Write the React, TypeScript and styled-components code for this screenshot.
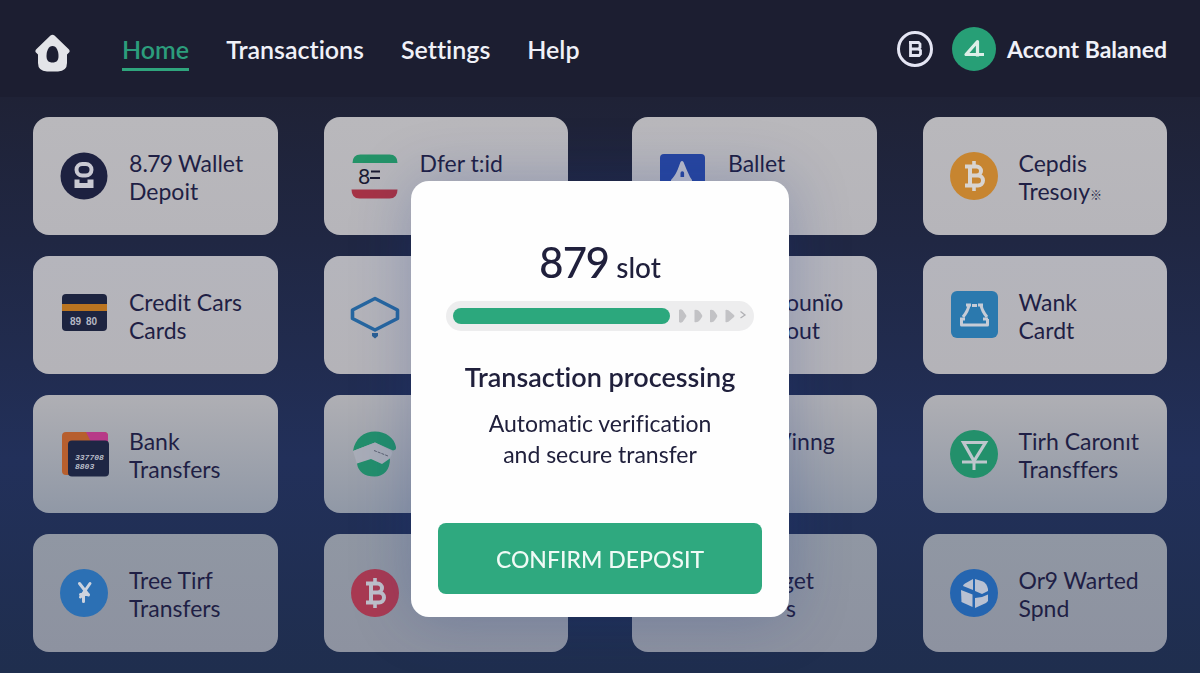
import React from "react";
import styled, { createGlobalStyle } from "styled-components";

const GlobalStyle = createGlobalStyle`
  *, *::before, *::after { box-sizing: border-box; }
  html, body, #root { min-height: 100vh; }
  body {
    margin: 0;
    font-family: Lato, "Open Sans", "Noto Sans CJK JP", sans-serif;
    font-variant-ligatures: none;
    font-variant-numeric: proportional-nums;
    color: #1f1f45;
    background: #1f2a48;
  }
  button { font: inherit; font-variant-ligatures: none; font-variant-numeric: proportional-nums; color: inherit; }
`;

const Page = styled.div`
  min-height: 100vh;
  background: linear-gradient(180deg, #1f2236 97px, #202743 240px, #22305a 460px, #1f2e4e 100%);
`;

const Header = styled.header`
  display: flex;
  align-items: center;
  height: 97px;
  padding: 0 33px;
  background: #1c1e31;
`;

const HomeLink = styled.a`
  display: flex;
  width: 38px;
  margin-right: 51px;
  padding-top: 8px;
`;

const Nav = styled.nav`
  display: flex;
  gap: 37px;
`;

const NavLink = styled.a<{ $active?: boolean }>`
  padding: 8px 0 4px;
  font-size: 25px;
  font-weight: 600;
  line-height: 30px;
  text-decoration: none;
  color: ${(p) => (p.$active ? "#2c9d7c" : "#f0f1f8")};
  border-bottom: 3px solid ${(p) => (p.$active ? "#2fa57d" : "transparent")};
`;

const Account = styled.div`
  display: flex;
  align-items: center;
  margin-left: auto;
  color: #f0f1f8;
  font-size: 23px;
  font-weight: 700;
`;

const RoundButton = styled.button<{ $filled?: boolean }>`
  display: grid;
  place-items: center;
  width: ${(p) => (p.$filled ? 44 : 36)}px;
  height: ${(p) => (p.$filled ? 44 : 36)}px;
  margin-right: ${(p) => (p.$filled ? 11 : 19)}px;
  padding: 0;
  border: ${(p) => (p.$filled ? "0" : "3px solid #e4e5f3")};
  border-radius: 50%;
  background: ${(p) => (p.$filled ? "#279f76" : "transparent")};
`;

const Methods = styled.main`
  display: grid;
  grid-template-columns: 1fr 1fr;
  gap: 64px;
  padding: 20px 33px;
`;

const MethodGroup = styled.div`
  display: grid;
  grid-template-columns: 1fr 1fr;
  gap: 21px 46px;
`;

const tones = [
  "linear-gradient(180deg, #b9b8bc, #b6b5ba)",
  "linear-gradient(180deg, #b5b5bc, #b4b3b8)",
  "linear-gradient(180deg, #afafb4, #9098a6)",
  "linear-gradient(180deg, #9097a3, #8d92a0)",
];

const Card = styled.button<{ $row: number }>`
  display: flex;
  align-items: center;
  gap: 21px;
  min-height: 118px;
  padding: 0 10px 0 27px;
  border: 0;
  border-radius: 16px;
  background: ${(p) => tones[p.$row]};
  text-align: left;
`;

const CardIcon = styled.svg`
  flex: none;
  width: 48px;
  height: 48px;
  overflow: visible;
`;

const CardLabel = styled.span`
  display: grid;
  grid-auto-rows: 28px;
  height: 56px;
  margin-top: 2px;
  font-size: 23px;
  line-height: 28px;
  white-space: nowrap;
`;

const LabelLine = styled.span<{ $lead?: number }>`
  padding-left: ${(p) => p.$lead ?? 0}px;
`;

const Sparkle = styled.small`
  font-size: 12px;
`;

const Overlay = styled.div`
  position: fixed;
  inset: 0;
  display: grid;
  place-items: center;
  padding-top: 125px;
`;

const Dialog = styled.section`
  display: flex;
  flex-direction: column;
  align-items: center;
  width: 378px;
  padding: 56px 27px 23px;
  border-radius: 18px;
  background: #fefefe;
  box-shadow: 0 0 60px rgba(20, 50, 140, 0.25);
  color: #20203c;
  text-align: center;
`;

const Amount = styled.h1`
  margin: 0;
  font-size: 42px;
  font-weight: 500;
  line-height: 50px;
`;

const Unit = styled.span`
  font-size: 28px;
`;

const Progress = styled.div`
  display: flex;
  align-items: center;
  gap: 9px;
  width: 308px;
  height: 30px;
  margin-top: 9px;
  padding: 0 7px;
  border-radius: 15px;
  background: #ededee;
`;

const ProgressFill = styled.div`
  width: 217px;
  height: 16px;
  border-radius: 8px;
  background: #2ca87d;
`;

const Heading = styled.h2`
  margin: 30px 0 0;
  font-size: 27px;
  font-weight: 600;
  line-height: 32px;
`;

const Note = styled.p`
  margin: 15px 0 0;
  font-size: 23px;
  line-height: 31px;
`;

const Confirm = styled.button`
  align-self: stretch;
  height: 71px;
  margin-top: 53px;
  border: 0;
  border-radius: 8px;
  background: #2fa97f;
  color: #effaf5;
  font-size: 23px;
  font-weight: 500;
`;

const WalletIcon = () => (
  <CardIcon viewBox="0 0 48 48">
    <circle cx="24" cy="24" r="23.5" fill="#1d2140" />
    <rect x="16.5" y="12" width="15" height="11.5" rx="5.7" fill="none" stroke="#c9c9d2" strokeWidth="4" />
    <path d="M14.500 27.500h5v3.500h8v-3.500h6V36h-19z" fill="#c9c9d2" />
  </CardIcon>
);

const CreditIcon = () => (
  <CardIcon viewBox="0 0 48 48">
    <rect x="2" y="3" width="45" height="37" rx="4" fill="#1d2440" />
    <rect x="2" y="13" width="45" height="7" fill="#ba7420" />
    <text x="10" y="34" fontSize="10" fontWeight="700" fill="#b5b8c4" fontFamily="Liberation Sans, sans-serif">89</text>
    <text x="26" y="34" fontSize="10" fontWeight="700" fill="#b5b8c4" fontFamily="Liberation Sans, sans-serif">80</text>
  </CardIcon>
);

const BankIcon = () => (
  <CardIcon viewBox="0 0 48 48">
    <rect x="2" y="2" width="46" height="43" rx="4" fill="#b75f2e" />
    <path d="M26 2h18a4 4 0 0 1 4 4v8H32z" fill="#b73a88" />
    <rect x="8" y="10.500" width="41" height="36" rx="4" fill="#1e2644" />
    <g fontSize="8" fontWeight="700" fontStyle="italic" fill="#b9bdc8" fontFamily="Liberation Mono, monospace">
      <text x="15" y="30">337708</text>
      <text x="15" y="39">8803</text>
    </g>
  </CardIcon>
);

const YenIcon = () => (
  <CardIcon viewBox="0 0 48 48">
    <circle cx="24" cy="24" r="24" fill="#2c70b4" />
    <path
      d="M19.500 14.500 28.500 26M30 14.500 20.500 28M20.500 25.500h8M23.500 25v7.500"
      fill="none"
      stroke="#cdd3de"
      strokeWidth="3"
      strokeLinecap="round"
    />
  </CardIcon>
);

const FlagIcon = () => (
  <CardIcon viewBox="0 0 48 48">
    <path d="M1.500 11q0-8.500 8-8.500h29q8 0 8 8.500z" fill="#249368" />
    <path d="M.5 37.500h46q0 9-8 9h-30q-8 0-8-9z" fill="#a63346" />
    <text x="7" y="32" fontSize="21" fill="#1b1b33">8</text>
    <path d="M20 19.500h9M19 26h10" stroke="#1b1b33" strokeWidth="2" />
  </CardIcon>
);

const HexIcon = () => (
  <CardIcon viewBox="0 0 48 48">
    <path
      d="M24 7.500 46.500 19v8.500L24 39 1.500 27.500V19z"
      fill="none"
      stroke="#2767a0"
      strokeWidth="3.600"
      strokeLinejoin="round"
    />
    <path d="M21 42h6v3l-3 2.500-3-2.500z" fill="#2a5f94" />
  </CardIcon>
);

const GlobeIcon = () => (
  <CardIcon viewBox="0 0 48 48">
    <path d="M2 21C4 8.500 13 1.500 24 1.500S43.500 8 45 17q.5 3-3 3.500L24 12.500z" fill="#238f6c" />
    <path d="M2 21 24 12.500 39 20q4 2 0 8l-8 6.500-11-5-14 4.500z" fill="#a9adb8" />
    <path d="M23 20.500l14 5.500" stroke="#5c6070" strokeWidth="1" strokeDasharray="3 1" />
    <path d="M6 33.500l14-4.500 11 5 8-5.500C39 40 33 46.500 23.500 46.500 14 46.500 7 42 6 33.500z" fill="#238f6c" />
  </CardIcon>
);

const BitcoinMark = ({ color }: { color: string }) => (
  <g fill="none" stroke={color}>
    <path
      strokeWidth="4"
      strokeLinejoin="round"
      d="M15 14.500h11.500a4.300 4.300 0 0 1 0 9H20h8a5 5 0 0 1 0 10H15M20 14.500v19"
    />
    <path strokeWidth="3.600" d="M24 9v5.500M24 33.500V39" />
  </g>
);

const CoinIcon = ({ fill, mark }: { fill: string; mark: string }) => (
  <CardIcon viewBox="0 0 48 48">
    <circle cx="24" cy="24" r="24" fill={fill} />
    <BitcoinMark color={mark} />
  </CardIcon>
);

const TowerIcon = () => (
  <CardIcon viewBox="0 0 48 48">
    <rect x="1" y="2" width="45" height="44" rx="4" fill="#2746a0" />
    <path d="M21.500 10q1.500-2 3 0c2 5 4 10 6.500 15l2 3v3H12v-3c5-5 7-11 9.500-18z" fill="#bcbecb" />
    <path d="M21.500 25v-4a1.800 1.800 0 0 1 3.600 0v4z" fill="#2746a0" />
  </CardIcon>
);

const TrayIcon = () => (
  <CardIcon viewBox="0 0 48 48">
    <rect x="1" y="0" width="47" height="47" rx="6" fill="#2b79ae" />
    <g fill="none" stroke="#c6ccd6" strokeWidth="3" strokeLinejoin="round">
      <path d="M16 14h5M22 14.500h5M28 14h5" />
      <path d="M19 14q-1 6-6 12M31 14q1 6 6 12" />
      <path d="M11.500 28v6h26v-6M10 28h5M33 28h5" />
    </g>
  </CardIcon>
);

const TriangleIcon = () => (
  <CardIcon viewBox="0 0 48 48">
    <circle cx="24" cy="24" r="24" fill="#23906b" />
    <path d="M13.500 12.500h22L24 31z" fill="none" stroke="#bec6cc" strokeWidth="3.200" />
    <path d="M12 32h25M24 28v12" stroke="#bec6cc" strokeWidth="3" />
  </CardIcon>
);

const BoxIcon = () => (
  <CardIcon viewBox="0 0 48 48">
    <circle cx="24" cy="24" r="24" fill="#2565b0" />
    <g fill="#b9c1d2">
      <path d="M13 17q0-1.500 2-2.500l8-4.500v11z" />
      <path d="M25 10l8 2.500q4 2 5 7.500v2l-6 3-7-3z" />
      <path d="M11 21l11.500 4.500V38L11.500 33z" />
      <path d="M25 29l7-1 6-2.500V32l-2 2-11 5z" />
    </g>
  </CardIcon>
);

type Line = { text: string; lead?: number; sparkle?: boolean };
type Method = { icon: React.ReactNode; name?: string; lines: Line[] };

/* Leads place the end of a label whose start lies under the dialog. */
const groups: Method[][] = [
  [
    { icon: <WalletIcon />, lines: [{ text: "8.79 Wallet" }, { text: "Depoit" }] },
    { icon: <FlagIcon />, lines: [{ text: "Dfer t:id" }] },
    { icon: <CreditIcon />, lines: [{ text: "Credit Cars" }, { text: "Cards" }] },
    { icon: <HexIcon />, name: "Network", lines: [] },
    { icon: <BankIcon />, lines: [{ text: "Bank" }, { text: "Transfers" }] },
    { icon: <GlobeIcon />, name: "Globe", lines: [] },
    { icon: <YenIcon />, lines: [{ text: "Tree Tirf" }, { text: "Transfers" }] },
    { icon: <CoinIcon fill="#a93a52" mark="#bfc0ca" />, name: "Coin", lines: [] },
  ],
  [
    { icon: <TowerIcon />, lines: [{ text: "Ballet" }] },
    { icon: <CoinIcon fill="#c78530" mark="#d8d4d0" />, lines: [{ text: "Cepdis" }, { text: "Tresoıy", sparkle: true }] },
    { icon: <CardIcon />, lines: [{ text: "ounïo", lead: 58 }, { text: "out", lead: 58 }] },
    { icon: <TrayIcon />, lines: [{ text: "Wank" }, { text: "Cardt" }] },
    { icon: <CardIcon />, lines: [{ text: "Vinng", lead: 48 }] },
    { icon: <TriangleIcon />, lines: [{ text: "Tirh Caronıt" }, { text: "Transffers" }] },
    { icon: <CardIcon />, lines: [{ text: "get", lead: 54 }, { text: "s", lead: 58 }] },
    { icon: <BoxIcon />, lines: [{ text: "Or9 Warted" }, { text: "Spnd" }] },
  ],
];

export default function App() {
  return (
    <Page>
      <GlobalStyle />
      <Header>
        <HomeLink href="#home" aria-label="Home">
          <svg width="38" height="38" viewBox="0 0 38 38">
            <path
              d="M17.500 1.500q2-1.500 4 0L36 15.500q1.500 2-.5 3.500l-1.500 1.500V29q0 8-9 8.500H14Q5 37 5 29v-8.500L3.500 19q-2-1.500-.5-3.500z"
              fill="#e3e4e8"
            />
            <path d="M19.500 12c4 0 6 5 6 10 0 4.500-2 6.500-6 6.500s-6-2-6-6.500c0-5 2-10 6-10z" fill="#1c1e31" />
          </svg>
        </HomeLink>
        <Nav>
          <NavLink href="#home" $active aria-current="page">Home</NavLink>
          <NavLink href="#transactions">Transactions</NavLink>
          <NavLink href="#settings">Settings</NavLink>
          <NavLink href="#help">Help</NavLink>
        </Nav>
        <Account>
          <RoundButton aria-label="Currency">
            <svg width="14" height="16" viewBox="0 0 14 16">
              <path
                d="M1 1.500h9.500l1.500 1.500v3.500L10.500 8l2 1.500V13L11 14.500H2.500V1.500M2.500 8h8"
                fill="none"
                stroke="#e4e5f3"
                strokeWidth="2.800"
              />
            </svg>
          </RoundButton>
          <RoundButton $filled aria-label="Account">
            <svg width="22" height="22" viewBox="0 0 22 22">
              <path d="M14.500 18.500V3.500L3 16.500h18" fill="none" stroke="#dcefe8" strokeWidth="3.200" strokeLinejoin="round" />
            </svg>
          </RoundButton>
          <span>Accont Balaned</span>
        </Account>
      </Header>

      <Methods>
        {groups.map((group, g) => (
          <MethodGroup key={g}>
            {group.map((method, i) => (
              <Card key={i} $row={Math.floor(i / 2)} aria-label={method.name}>
                {method.icon}
                <CardLabel>
                  {method.lines.map((line) => (
                    <LabelLine key={line.text} $lead={line.lead}>
                      {line.text}
                      {line.sparkle && <Sparkle>※</Sparkle>}
                    </LabelLine>
                  ))}
                </CardLabel>
              </Card>
            ))}
          </MethodGroup>
        ))}
      </Methods>

      <Overlay>
        <Dialog role="dialog" aria-labelledby="amount">
          <Amount id="amount">
            879<Unit> slot</Unit>
          </Amount>
          <Progress role="progressbar" aria-valuenow={74} aria-label="Transaction processing">
            <ProgressFill />
            <svg width="68" height="16" viewBox="0 0 68 16">
              <g fill="#c2c2c5">
                <path d="M0 2q3-2 5 2l2 3q1 1 0 2l-2 3q-2 4-5 2z" />
                <path d="M15.500 2q3-1 5.500 2l2 3q.7 1 0 2l-2 3q-2.500 3-5.500 2z" />
                <path d="M31 2q3-1 5 2l2 3q.7 1 0 2l-2 3q-2 3-5 2z" />
                <path d="M46.500 2q2-1 5 2l3.500 3q1 1 0 2l-3.500 3q-3 3-5 2z" />
              </g>
              <path d="M61.500 3.500 66 7l-4.500 3" fill="none" stroke="#b0b0b4" strokeWidth="1.300" />
            </svg>
          </Progress>
          <Heading>Transaction processing</Heading>
          <Note>
            Automatic verification
            <br />
            and secure transfer
          </Note>
          <Confirm>CONFIRM DEPOSIT</Confirm>
        </Dialog>
      </Overlay>
    </Page>
  );
}
